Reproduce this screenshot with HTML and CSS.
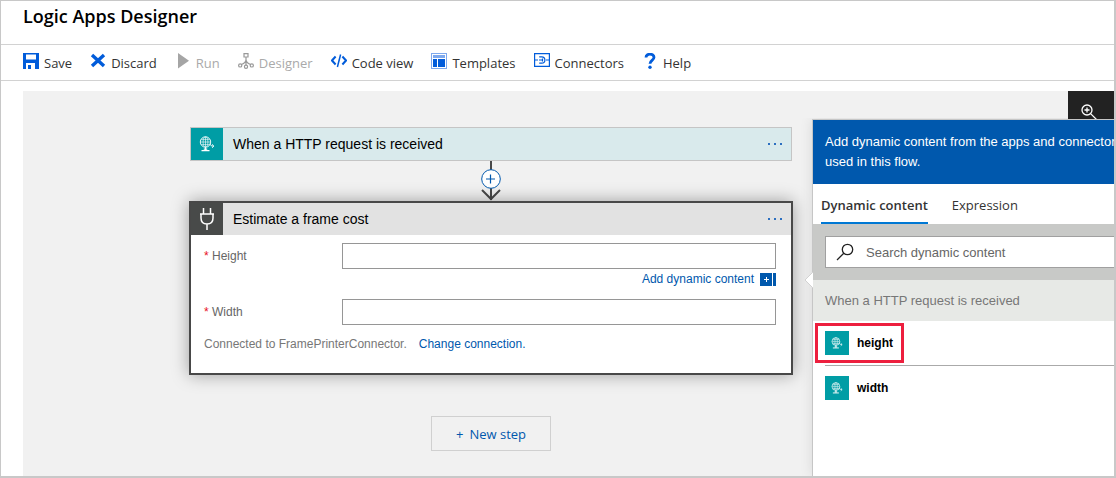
FILE: index.html
```
<!DOCTYPE html>
<html lang="en">
<head>
<meta charset="utf-8">
<meta name="viewport" content="width=device-width, initial-scale=1">
<title>Logic Apps Designer</title>
<link rel="stylesheet" href="styles.css">
</head>
<body>
<svg class="defs" aria-hidden="true">
  <symbol id="globe" viewBox="0 0 16 16">
    <g fill="none" stroke="#fff" stroke-width="0.9">
      <circle cx="6.500" cy="6" r="5.200"/>
      <ellipse cx="6.500" cy="6" rx="2.400" ry="5.200" stroke-width="0.600"/>
      <path d="M1.500 6h10M2.300 3.400h8.400M2.300 8.600h8.400M6.500 1v10" stroke-width="0.600"/>
      <path d="M11 7.500c.3 2 1 2.600 3.500 2.600M13 8.300l1.900 1.800-1.900 1.700M6.500 11v3"/>
    </g>
    <path d="M2.500 14.600h8M4.800 13.200h3.400" stroke="#fff" stroke-width="1.200"/>
  </symbol>
</svg>
<div class="page">
  <header class="title-bar"><h1 class="title">Logic Apps Designer</h1></header>
  <nav class="toolbar" aria-label="Designer commands">
    <button class="command"><svg class="icon" viewBox="0 0 16 16"><path fill="#015cda" fill-rule="evenodd" d="M0 0h16v16H0zM3 1.500V6.500h10V1.500zM3 10v6h9v-6z"/><path fill="#015cda" d="M5 12h3v4H5z"/></svg>Save</button>
    <button class="command"><svg class="icon" viewBox="0 0 16 16"><path d="M2 2l12 11M14 2L2 13" stroke="#015cda" stroke-width="3.400"/></svg>Discard</button>
    <button class="command" disabled><svg class="icon" viewBox="0 0 16 16"><path d="M3 0l11 7.800L3 15.500z" fill="#a5a5a5"/></svg>Run</button>
    <button class="command" disabled><svg class="icon" viewBox="0 0 16 16"><g fill="none" stroke="#999" stroke-width="1.200"><path d="M6 .6h4v3.400H6zM8 4v8M8 6.500c0 3-2 4-4.500 5M8 6.500c0 3 2 4 4.500 5"/><circle cx="2.200" cy="12.400" r="1.600"/><circle cx="8" cy="13.800" r="1.600"/><circle cx="13.800" cy="12.400" r="1.600"/></g></svg>Designer</button>
    <button class="command"><svg class="icon" viewBox="0 0 16 16"><path d="M4.600 3.500L1 7.500l3.600 4M11.400 3.500L15 7.500l-3.600 4" fill="none" stroke="#015cda" stroke-width="2"/><path d="M9.600 1.500L6.400 14" stroke="#015cda" stroke-width="1.500"/></svg>Code view</button>
    <button class="command"><svg class="icon" viewBox="0 0 16 16"><path fill="#7ea9ee" d="M0 0h16v16H0z"/><path fill="#fff" d="M1 1h14v14H1z"/><path fill="#7ea9ee" d="M2 2h12v3H2z"/><path fill="#015cda" d="M2 6h4v8H2zM7 6h7v8H7z"/></svg>Templates</button>
    <button class="command"><svg class="icon" viewBox="0 0 16 16"><g fill="none" stroke="#015cda" stroke-width="1.200"><path d="M.6.600h14.800v12.800H.6zM.6 7H4M12 7h3.400M5 7h3.500M5.200 3.800h2.500a3.200 3.200 0 0 1 0 6.400H5.200M8.500 5.500v3"/></g></svg>Connectors</button>
    <button class="command"><svg class="icon" viewBox="0 0 16 16"><path d="M4 4.500C4 0 12 .3 12 4.300c0 3-4 3.200-4 6.400" fill="none" stroke="#015cda" stroke-width="2.800"/><circle cx="8" cy="14.300" r="1.700" fill="#015cda"/></svg>Help</button>
  </nav>
  <main class="canvas">
    <div class="flow">
      <section class="card trigger">
        <span class="tile teal"><svg class="glyph" viewBox="0 0 16 16"><use href="#globe"/></svg></span>
        <h2 class="card-title">When a HTTP request is received</h2>
        <button class="more" aria-label="Trigger menu"><svg class="dots" viewBox="0 0 16 2"><path d="M1 0h2v2H1zM7 0h2v2H7zM13 0h2v2h-2z" fill="#2c6fc0"/></svg></button>
      </section>
      <button class="insert" aria-label="Insert a step"><svg class="arrow" viewBox="0 0 20 40"><path d="M10 0v39M1 29l9 9 9-9" fill="none" stroke="#484848" stroke-width="2"/><circle cx="10" cy="18" r="9.300" fill="#fff" stroke="#0058ad" stroke-width="1"/><path d="M5 18h9M9.500 13.500v9" stroke="#0058ad" stroke-width="1.200"/></svg></button>
      <section class="card action">
        <div class="card-head">
          <span class="tile dark"><svg class="plug" viewBox="0 0 16 24"><path d="M4.500 1v6M11.500 1v6M1 7h14M2 7v4c0 4 2.500 6 6 6s6-2 6-6V7M8 17v6" fill="none" stroke="#fff" stroke-width="1.500"/></svg></span>
          <h2 class="card-title">Estimate a frame cost</h2>
          <button class="more" aria-label="Action menu"><svg class="dots" viewBox="0 0 16 2"><path d="M1 0h2v2H1zM7 0h2v2H7zM13 0h2v2h-2z" fill="#2c6fc0"/></svg></button>
        </div>
        <form class="fields">
          <div class="field"><label class="label" for="h"><span class="required">*</span> Height</label><input class="box" id="h" type="text"></div>
          <a class="add" href="#">Add dynamic content <svg class="add-icon" viewBox="0 0 16 13"><path d="M0 0h12v13H0zM13 0h3v13h-3z" fill="#0058ad"/><path d="M4 6.500h5M6.500 4v5" stroke="#fff"/></svg></a>
          <div class="field"><label class="label" for="w"><span class="required">*</span> Width</label><input class="box" id="w" type="text"></div>
          <p class="connection">Connected to FramePrinterConnector.<a class="link" href="#">Change connection.</a></p>
        </form>
      </section>
      <button class="new-step"><span class="plus">+</span>New step</button>
    </div>
    <aside class="side">
      <button class="zoom" aria-label="Zoom in"><svg class="zoom-icon" viewBox="0 0 16 16"><g fill="none" stroke="#fff" stroke-width="1.300"><circle cx="6" cy="6" r="5"/><path d="M9.600 9.600L15.500 15.500M3.500 6h5M6 3.500v5"/></g></svg></button>
      <div class="panel">
        <svg class="callout" viewBox="0 0 9 16"><path d="M9 0L1 8l8 8z" fill="#fff"/><path d="M9 0L1 8l8 8" fill="none" stroke="#d2d2d2"/></svg>
        <div class="panel-view">
          <div class="panel-body">
            <p class="intro">Add dynamic content from the apps and connectors used in this flow.</p>
            <div class="tabs" role="tablist"><button class="tab active" role="tab" aria-selected="true">Dynamic content</button><button class="tab" role="tab" aria-selected="false">Expression</button></div>
            <div class="search-area"><label class="search"><svg class="search-icon" viewBox="0 0 18 18"><circle cx="11.500" cy="6.500" r="5.200" fill="none" stroke="#222" stroke-width="1.300"/><path d="M7.800 10.200L1 17" stroke="#222" stroke-width="1.300"/></svg><input class="search-input" type="text" placeholder="Search dynamic content" aria-label="Search dynamic content"></label></div>
            <h3 class="group">When a HTTP request is received</h3>
            <div class="tokens">
              <button class="token marked"><span class="tile small teal"><svg class="glyph-small" viewBox="0 0 16 16"><use href="#globe"/></svg></span>height</button>
              <button class="token"><span class="tile small teal"><svg class="glyph-small" viewBox="0 0 16 16"><use href="#globe"/></svg></span>width</button>
            </div>
          </div>
        </div>
      </div>
    </aside>
  </main>
</div>
</body>
</html>
```
FILE: styles.css
```
*, ::after { box-sizing: border-box; }
body { margin: 0; background: #fff; color: #000; font-family: "Liberation Sans", Arial, sans-serif; }
h1, h2, h3, p { margin: 0; font-weight: 400; }
button { padding: 0; border: 0; background: none; color: inherit; font: inherit; cursor: pointer; }
a { color: #0058ad; text-decoration: none; }
svg { display: block; flex: none; }
.defs { display: none; }
.page { display: flex; flex-direction: column; min-height: 100vh; border: 1px solid #c8c8c8; border-width: 1px 2px 2px 1px; }
.title-bar { height: 44px; padding: 4px 22px; border-bottom: 1px solid #d2d2d2; }
.title { font: 600 18px/22px "Open Sans", sans-serif; }
.toolbar { display: flex; align-items: center; gap: 18px; height: 36px; padding: 0 22px; border-bottom: 1px solid #d2d2d2; }
.command { display: flex; align-items: center; gap: 5px; padding-top: 1px; color: #333; font: 13px/20px "Open Sans", sans-serif; white-space: nowrap; }
.command:disabled { color: #aaa; }
.icon { width: 16px; height: 16px; margin-bottom: 4px; }
.canvas { display: flex; flex: 1; margin: 10px 0 0 22px; background: #f1f1f1; }
.flow { display: flex; flex: 1; flex-direction: column; align-items: center; padding: 36px 19px 24px 166px; }
.card { align-self: stretch; }
.trigger { display: flex; align-items: center; margin: 0 1px; border: 1px solid #c5c5c5; background: #d9eaec; }
.tile { display: flex; align-items: center; justify-content: center; flex: none; width: 32px; height: 32px; }
.teal { background: #009da5; }
.dark { background: #484a49; }
.small { width: 24px; height: 24px; }
.glyph { width: 16px; height: 16px; }
.glyph-small { width: 12px; height: 12px; }
.plug { width: 16px; height: 24px; }
.card-title { flex: 1; padding-left: 10px; font-size: 14px; line-height: 20px; }
.more { display: flex; align-items: center; height: 32px; padding: 0 8px; }
.dots { width: 16px; height: 2px; }
.arrow { width: 20px; height: 40px; }
.action { border: 2px solid #484848; background: #fff; box-shadow: 0 0 16px rgba(0, 0, 0, 0.35); }
.card-head { display: flex; align-items: center; background: #e2e2e2; }
.fields { display: flex; flex-direction: column; padding: 8px 15px 21px 13px; color: #666; font-size: 12px; line-height: 16px; }
.field { display: flex; align-items: center; }
.label { flex: none; width: 138px; }
.required { color: #e81123; }
.box { flex: 1; min-width: 0; height: 26px; padding: 0 6px; border: 1px solid #969696; background: #fff; font: inherit; }
.add { display: flex; align-items: center; align-self: flex-end; gap: 6px; height: 20px; margin-bottom: 10px; }
.add-icon { width: 16px; height: 13px; }
.connection { display: flex; flex-wrap: wrap; gap: 12px; padding-top: 11px; color: #777; }
.new-step { display: flex; align-items: center; justify-content: center; gap: 6px; width: 120px; height: 35px; margin-top: 41px; border: 1px solid #d0d0d0; color: #0058ad; font: 13px/20px "Open Sans", sans-serif; }
.side { display: flex; flex: none; flex-direction: column; width: 302px; }
.zoom { align-self: flex-end; width: 46px; height: 28px; padding: 13px 0 0 13px; overflow: hidden; background: #222; }
.zoom-icon { width: 16px; height: 16px; }
.panel { display: flex; flex: 1; position: relative; border: 1px solid #c6c6c6; border-width: 1px 0 0 1px; background: #fff; box-shadow: 0 0 12px rgba(0, 0, 0, 0.1); clip-path: inset(-1px 0 0 -16px); }
.callout { position: absolute; top: 152px; left: -9px; width: 9px; height: 16px; }
.panel-view { flex: 1; min-width: 0; overflow: hidden; }
.panel-body { width: 336px; }
.intro { padding: 12px; background: #0058ad; color: #fff; font-size: 13px; line-height: 20px; }
.tabs { display: flex; gap: 24px; height: 40px; padding: 0 8px; }
.tab { padding-top: 4px; border-bottom: 2px solid transparent; color: #333; font: 13px/20px "Open Sans", sans-serif; }
.active { border-color: #0078d4; font-weight: 600; }
.search-area { padding: 12px; background: #c8c9c7; }
.search { display: flex; align-items: center; gap: 12px; height: 32px; padding: 0 10px; border: 1px solid #a0a0a0; background: #fff; }
.search-icon { width: 18px; height: 18px; }
.search-input { flex: 1; min-width: 0; padding: 1px 0 0; border: 0; outline: 0; font: 13px/20px "Liberation Sans", sans-serif; }
.search-input::placeholder { color: #666; }
.group { padding: 11px 12px 10px; background: #e7e9e6; color: #777; font-size: 13px; line-height: 20px; }
.tokens { padding: 0 12px; }
.token { display: flex; align-items: center; gap: 8px; position: relative; width: 100%; height: 44px; color: #000; font-size: 12px; font-weight: 700; }
.token + .token { height: 45px; border-top: 1px solid #aaa; }
.marked::after { content: ""; position: absolute; top: 2px; left: -10px; width: 89px; height: 40px; border: 3px solid #ed1f3e; }
```
